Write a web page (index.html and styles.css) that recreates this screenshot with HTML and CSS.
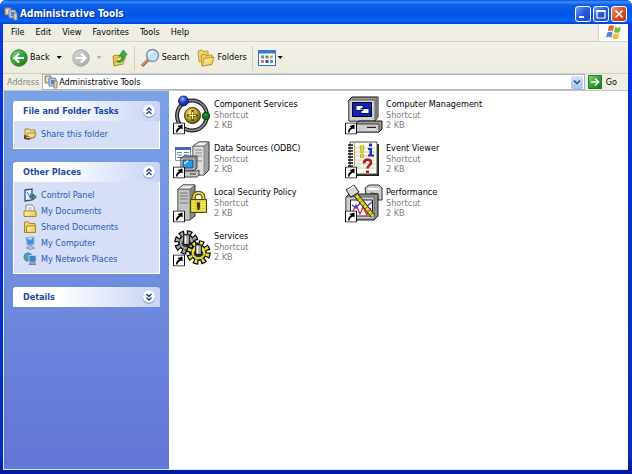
FILE: index.html
```html
<!DOCTYPE html>
<html lang="en">
<head>
  <meta charset="UTF-8" />
  <meta name="viewport" content="width=device-width, initial-scale=1.0"/>
  <title>Administrative Tools</title>
  <link rel="stylesheet" href="styles.css">
</head>
<body>

  <!-- Shared icon symbols -->
  <svg class="defs" aria-hidden="true">
    <defs>
      <linearGradient id="green" x1="0" y1="0" x2="1" y2="1"><stop offset="0" stop-color="#8fd97e"/><stop offset=".5" stop-color="#35a534"/><stop offset="1" stop-color="#16701a"/></linearGradient>
      <linearGradient id="grey" x1="0" y1="0" x2="1" y2="1"><stop offset="0" stop-color="#dededc"/><stop offset="1" stop-color="#a2a2a0"/></linearGradient>
      <linearGradient id="yellow" x1="0" y1="0" x2="1" y2="1"><stop offset="0" stop-color="#fffac0"/><stop offset="1" stop-color="#e9bf3c"/></linearGradient>
      <radialGradient id="gold" cx=".4" cy=".35" r=".7"><stop offset="0" stop-color="#fff27a"/><stop offset=".5" stop-color="#c2a52a"/><stop offset="1" stop-color="#5c4a08"/></radialGradient>
      <radialGradient id="ball" cx=".4" cy=".3" r=".7"><stop offset="0" stop-color="#a9c4ff"/><stop offset=".4" stop-color="#2d52dc"/><stop offset="1" stop-color="#0a1878"/></radialGradient>
      <symbol id="tools" viewBox="0 0 14 14">
        <path d="M1 1h6v7H1z" fill="#d9c489" stroke="#8e8260"/>
        <path d="M2 3h4M2 5h4" stroke="#fff8dc"/>
        <path d="M5 3h6l1 1v7H5z" fill="#b9c4e2" stroke="#6d7cae"/>
        <path d="M7 5h3v4H7z" fill="#5a7cd0"/>
        <path d="M10 6h3v7h-3z" fill="#e7d9a8" stroke="#8e8260"/>
      </symbol>
      <symbol id="shortcut" viewBox="0 0 12 12">
        <path d="M.5.5h11v11H.5z" fill="#fff" stroke="#111"/>
        <path d="M3 10c0-3 1-4 3-5L4.500 3.500 9.500 2v5L8 6C6 7 4.500 8 4.500 10z" fill="#000"/>
      </symbol>
      <symbol id="chevrons-up" viewBox="0 0 14 14">
        <circle cx="7" cy="7.500" r="6.300" fill="#8e9cc9"/>
        <circle cx="7" cy="6.800" r="6" fill="#fff"/>
        <path d="M4.500 6.500L7 4l2.500 2.500M4.500 10L7 7.500 9.500 10" fill="none" stroke="#1c3f94" stroke-width="1.300"/>
      </symbol>
      <symbol id="chevrons-down" viewBox="0 0 14 14">
        <circle cx="7" cy="7.500" r="6.300" fill="#8e9cc9"/>
        <circle cx="7" cy="6.800" r="6" fill="#fff"/>
        <path d="M4.500 4L7 6.500 9.500 4M4.500 7.500L7 10l2.500-2.500" fill="none" stroke="#1c3f94" stroke-width="1.300"/>
      </symbol>
      <symbol id="gear" viewBox="-13 -13 26 26">
        <circle r="10" fill="none" stroke="#000" stroke-width="5.500" stroke-dasharray="5.300 2.554"/>
        <circle r="8" fill="currentColor" stroke="#000" stroke-width="1.500"/>
        <circle r="9.500" fill="none" stroke="currentColor" stroke-width="4" stroke-dasharray="2.800 4.661" stroke-dashoffset="-1.100"/>
        <ellipse cy="1" rx="5" ry="4" fill="#333"/>
        <path d="M-3-8h6V2h-6z" fill="#a8a8a8" stroke="#111"/>
        <path d="M-1-7v8" stroke="#fff" stroke-width="1.500"/>
      </symbol>
    </defs>
  </svg>

  <div class="window">
    <header class="titlebar">
      <svg class="icon-14"><use href="#tools"/></svg>
      <h1>Administrative Tools</h1>
      <div class="controls">
        <button type="button" aria-label="Minimize"><svg viewBox="0 0 14 14"><path d="M3 10h5" stroke="#fff" stroke-width="2"/></svg></button>
        <button type="button" aria-label="Maximize"><svg viewBox="0 0 14 14"><path d="M3 4h8v7H3z" fill="none" stroke="#fff" stroke-width="1.200"/><path d="M2.500 4h9" stroke="#fff" stroke-width="2"/></svg></button>
        <button type="button" class="close" aria-label="Close"><svg viewBox="0 0 14 14"><path d="M3.500 3.500l7 7M10.500 3.500l-7 7" stroke="#fff" stroke-width="1.700"/></svg></button>
      </div>
    </header>

    <nav class="menubar">
      <button type="button">File</button>
      <button type="button">Edit</button>
      <button type="button">View</button>
      <button type="button">Favorites</button>
      <button type="button">Tools</button>
      <button type="button">Help</button>
      <div class="flag">
        <svg viewBox="1 1 14 13">
          <path d="M3.500 2c2-1 3-1 4.500 0L7 6.500C5.500 5.500 4.500 5.500 2.500 6.500z" fill="#e8602c"/>
          <path d="M9 2.500c1.500 1 3 1 5 0L13 7c-2 1-3.500 1-5 0z" fill="#76b843"/>
          <path d="M2.200 7.500c2-1 3-1 4.500 0l-1 4.500c-1.500-1-2.700-1-4.700 0z" fill="#4a86dc"/>
          <path d="M7.700 8c1.500 1 3 1 5 0l-1 4.500c-2 1-3.500 1-5 0z" fill="#f4bd30"/>
        </svg>
      </div>
    </nav>

    <div class="toolbar">
      <button type="button" class="tool">
        <svg class="icon-18" viewBox="0 0 18 18"><circle cx="9" cy="9" r="8.200" fill="url(#green)" stroke="#23802a"/><path d="M14 9H5M9 4.500L4.500 9 9 13.500" fill="none" stroke="#fff" stroke-width="2.200"/></svg>
        Back
      </button>
      <button type="button" class="caret" aria-label="Back history"></button>
      <button type="button" class="tool forward" aria-label="Forward">
        <svg class="icon-18" viewBox="0 0 18 18"><circle cx="9" cy="9" r="8.200" fill="url(#grey)" stroke="#a6a6a4"/><path d="M4 9h9M9 4.500L13.500 9 9 13.500" fill="none" stroke="#fff" stroke-width="2.200"/></svg>
      </button>
      <button type="button" class="caret disabled" aria-label="Forward history"></button>
      <button type="button" class="tool up" aria-label="Up">
        <svg class="icon-18" viewBox="0 0 18 18">
          <path d="M2 7l4-1 1 1 5-1v9l-9 2z" fill="#eecb55" stroke="#b08a25"/>
          <path d="M3 16.500L6 9l9-2-3 8z" fill="url(#yellow)" stroke="#b8902a" stroke-width=".8"/>
          <path d="M6 12c4 0 5-2 5-5H8l4.500-6L16 6h-2.500c0 5-2 8-7.500 7z" fill="#3fb03a" stroke="#187a1e" stroke-width=".8"/>
        </svg>
      </button>
      <span class="divider"></span>
      <button type="button" class="tool">
        <svg class="icon-20" viewBox="0 0 20 20"><path d="M8 12l-6 6" stroke="#9c5a2c" stroke-width="3"/><path d="M8 11.500l-6 6" stroke="#d99a66" stroke-width="1.400"/><circle cx="12.500" cy="7.500" r="6" fill="#c5e4fa" stroke="#7b93b8" stroke-width="1.500"/><path d="M9 7c0-2 1.500-3.500 4-3.500" stroke="#fff" stroke-width="1.600" fill="none"/></svg>
        Search
      </button>
      <button type="button" class="tool folders">
        <svg class="icon-18" viewBox="0 0 18 18">
          <path d="M1 2l4-1 1 1.500 5-.5v9l-9 2z" fill="#f3d76c" stroke="#b5922e" stroke-width=".9"/>
          <path d="M4 6l4-1 1 1.500 6-.5v9l-10 2z" fill="#f0cc55" stroke="#b5922e" stroke-width=".9"/>
          <path d="M5 17L7.500 9.500 17 8l-2 7.500z" fill="url(#yellow)" stroke="#b5922e" stroke-width=".9"/>
        </svg>
        Folders
      </button>
      <span class="divider"></span>
      <button type="button" class="tool" aria-label="Views">
        <svg class="icon-18" viewBox="0 0 18 18">
          <path d="M.500 1.500h17v15H.500z" fill="#fff" stroke="#3b6fc0"/><path d="M0 1h18v3.500H0z" fill="#3977d2"/>
          <path d="M3 6.500h3v3H3zM12 11h3v3h-3z" fill="#6a8bc9"/><path d="M7.500 6.500h3v3h-3z" fill="#51a35b"/><path d="M12 6.500h3v3h-3z" fill="#e4a84a"/><path d="M3 11h3v3H3z" fill="#cf7b62"/><path d="M7.500 11h3v3h-3z" fill="#2c4fa8"/>
        </svg>
      </button>
      <button type="button" class="caret views" aria-label="Choose view"></button>
    </div>

    <form class="addressbar">
      <label for="address">Address</label>
      <div class="combo">
        <svg class="icon-14"><use href="#tools"/></svg>
        <input id="address" type="text" value="Administrative Tools">
        <button type="button" aria-label="Show addresses"><svg viewBox="0 0 12 12"><path d="M3 4.500l3 3 3-3" fill="none" stroke="#34518f" stroke-width="1.700"/></svg></button>
      </div>
      <button type="button" class="go">
        <svg class="icon-14" viewBox="0 0 14 14"><path d="M.500.500h13v13H.500z" fill="url(#green)" stroke="#1d7a25"/><path d="M3 7h7M7 3.500L10.500 7 7 10.500" fill="none" stroke="#fff" stroke-width="1.700"/></svg>
        Go
      </button>
    </form>

    <div class="content">
      <aside class="sidebar">
        <section class="panel">
          <header>
            <h2>File and Folder Tasks</h2>
            <button type="button" aria-label="Collapse File and Folder Tasks"><svg><use href="#chevrons-up"/></svg></button>
          </header>
          <ul>
            <li><a href="#">
              <svg viewBox="0 0 14 14"><path d="M2 2h4l1 1h5v7H2z" fill="#f5dc7b" stroke="#a98830"/><path d="M3 11l2-5h8l-2 5z" fill="url(#yellow)" stroke="#a98830"/><path d="M1 8l4 1 4 2-3 2-5-1z" fill="#5a4530"/><path d="M3 10l5 1" stroke="#f1c7a0"/></svg>
              Share this folder</a></li>
          </ul>
        </section>

        <section class="panel">
          <header>
            <h2>Other Places</h2>
            <button type="button" aria-label="Collapse Other Places"><svg><use href="#chevrons-up"/></svg></button>
          </header>
          <ul>
            <li><a href="#">
              <svg viewBox="0 0 14 14"><path d="M2 2l7-1v11l-7 1z" fill="#e9f1fc" stroke="#2d4e8c" stroke-width="1.300"/><path d="M4 4l3 5 1-4" stroke="#4478c4" fill="none"/><path d="M7 8h3V6l3.500 3-3.500 3v-2H7z" fill="#4b9c4f" stroke="#2d4e6c" stroke-width=".8"/></svg>
              Control Panel</a></li>
            <li><a href="#">
              <svg viewBox="0 0 14 14"><path d="M3 1h6l2 2v6H3z" fill="#fff" stroke="#7c8794"/><path d="M5 4h4M5 6h4" stroke="#8ba6cf"/><path d="M1 7h12v5.500H1z" fill="url(#yellow)" stroke="#a88427"/></svg>
              My Documents</a></li>
            <li><a href="#">
              <svg viewBox="0 0 14 14"><path d="M1.500 2h4l1 1.500h5.500v9H1.500z" fill="#f4d668" stroke="#a88427"/><path d="M3.500 6h9v6.500h-9z" fill="url(#yellow)" stroke="#a88427"/></svg>
              Shared Documents</a></li>
            <li><a href="#">
              <svg viewBox="0 0 14 14"><path d="M3 1.500l8-.500v7.500L4 9z" fill="#438ce4" stroke="#a8b7ce" stroke-width="1.200"/><path d="M5 3l4-.500" stroke="#c4e4ff" stroke-width="1.500"/><path d="M6 9h3v2l3 1-5 1.500L3 12l3-1z" fill="#b9c4d4" stroke="#74839c" stroke-width=".7"/></svg>
              My Computer</a></li>
            <li><a href="#">
              <svg viewBox="0 0 14 14"><circle cx="5" cy="5" r="4.500" fill="#3d91c7"/><path d="M2 3l3-1 1 3-3 2z" fill="#61b262"/><path d="M6 3.500h7V10H6z" fill="#3f80da" stroke="#bdc9dc"/><path d="M8 10h3l2 2.500H6z" fill="#a0aec4" stroke="#596b8a" stroke-width=".7"/></svg>
              My Network Places</a></li>
          </ul>
        </section>

        <section class="panel">
          <header>
            <h2>Details</h2>
            <button type="button" aria-label="Expand Details"><svg><use href="#chevrons-down"/></svg></button>
          </header>
        </section>
      </aside>

      <main class="files">
        <a class="file" href="#">
          <svg viewBox="0 0 40 40">
            <circle cx="20" cy="20.500" r="15" fill="none" stroke="#222" stroke-width="4"/>
            <circle cx="20" cy="20.500" r="15" fill="none" stroke="#8d8d8d" stroke-width="1.600"/>
            <circle cx="20.500" cy="20.500" r="8" fill="url(#gold)" stroke="#3e3305"/>
            <path d="M20.500 15v11M15 20.500h11" stroke="#5c4a08" stroke-width="2.200"/>
            <path d="M20.500 17v7M17 20.500h7" stroke="#fff9a0"/>
            <circle cx="11.500" cy="6" r="5" fill="url(#ball)" stroke="#0a1464" stroke-width=".8"/>
            <circle cx="34" cy="21" r="3.700" fill="#177a23" stroke="#063b0c"/>
            <path d="M32.500 19.500l2 1" stroke="#7ed884"/>
            <use href="#shortcut" x="1" y="27.500" width="12" height="12"/>
          </svg>
          <span class="info"><strong>Component Services</strong><span>Shortcut</span><span>2 KB</span></span>
        </a>
        <a class="file" href="#">
          <svg viewBox="0 0 40 40">
            <path d="M5 5l3-3h26v20l-3 4H5z" fill="#9b9b9b" stroke="#111"/>
            <path d="M5 5h26v21H5z" fill="#d0d0d0" stroke="#444" stroke-width=".8"/>
            <path d="M31 5l3-3v20l-3 4z" fill="#777"/>
            <path d="M8.500 7.500h19v14h-19z" fill="#0b22c4" stroke="#000"/>
            <path d="M12 10.500h7v5h-7zM17 13.500h8v5h-8z" fill="#fff" stroke="#0a1464"/>
            <path d="M12 29h-1l4-3h23v8l-3 3H12z" fill="#9b9b9b" stroke="#111"/>
            <path d="M11 29h24v8H11z" fill="#cdcdcd" stroke="#222" stroke-width=".8"/>
            <path d="M23 32.500h9" stroke="#222" stroke-width="1.400"/>
            <path d="M23 34h9" stroke="#fff"/>
            <use href="#shortcut" x="1" y="27.500" width="12" height="12"/>
          </svg>
          <span class="info"><strong>Computer Management</strong><span>Shortcut</span><span>2 KB</span></span>
        </a>
        <a class="file" href="#">
          <svg viewBox="0 0 40 40">
            <path d="M21 7l6-4h10v28l-5 5H21z" fill="#a2a2a2" stroke="#333"/>
            <path d="M21 7h11v29H21z" fill="#ddd" stroke="#777" stroke-width=".8"/>
            <path d="M21 7l6-4h10l-5 4z" fill="#f2f2f2" stroke="#555" stroke-width=".8"/>
            <path d="M23 11h7M23 14h7M23 17h7M23 22h7" stroke="#888"/>
            <path d="M3.500 8.500h15v13h-15z" fill="#fff" stroke="#7d95c8"/>
            <path d="M3 8h16v3H3z" fill="#4569bd"/>
            <path d="M5 13.500h5M5 16h5M5 18.500h5M12 13.500h5M12 16h5" stroke="#6281bd"/>
            <path d="M9 19l3-2h13v12l-2 2H9z" fill="#a5a5a5" stroke="#222" stroke-width=".8"/>
            <path d="M9 19h14v12H9z" fill="#ddd" stroke="#555" stroke-width=".8"/>
            <path d="M11 21h10v8H11z" fill="#2d9adc" stroke="#163b70"/>
            <path d="M12 25l4-3.500" stroke="#c6f0ff" stroke-width="1.500"/>
            <path d="M11 32h14l2-1v5l-2 2H11z" fill="#c6c6c6" stroke="#222" stroke-width=".8"/>
            <path d="M18 35h6" stroke="#333"/>
            <use href="#shortcut" x="1" y="27.500" width="12" height="12"/>
          </svg>
          <span class="info"><strong>Data Sources (ODBC)</strong><span>Shortcut</span><span>2 KB</span></span>
        </a>
        <a class="file" href="#">
          <svg viewBox="0 0 40 40">
            <path d="M8 5h27v32H8z" fill="#222"/>
            <path d="M6 3h27v32H6z" fill="#fffde8" stroke="#555"/>
            <path d="M11 9h20M11 13h20M11 17h20M11 21h20M11 25h20M11 29h20" stroke="#b8c0cc" stroke-width=".8"/>
            <path d="M10.500 3v32" stroke="#c2a777"/>
            <path d="M4 6h5M4 9h5M4 12h5M4 15h5M4 18h5M4 21h5M4 24h5M4 27h5" stroke="#111" stroke-width="1.500"/>
            <path d="M16 7h4l-1 7h-2zM16.500 15.500h3v3h-3z" fill="#f4df20" stroke="#908216" stroke-width=".6"/>
            <path d="M25 4.500h3v3h-3zM24 9h4v6.500h2v2h-6v-2h1.500V11H24z" fill="#1a2fc8"/>
            <path d="M20 24.500c0-5 7-5 7-1 0 3-3.500 2.500-3.500 6" fill="none" stroke="#b51721" stroke-width="2.700"/>
            <path d="M22 31.500h3V34h-3z" fill="#b51721"/>
            <use href="#shortcut" x="1" y="27.500" width="12" height="12"/>
          </svg>
          <span class="info"><strong>Event Viewer</strong><span>Shortcut</span><span>2 KB</span></span>
        </a>
        <a class="file" href="#">
          <svg viewBox="0 0 40 40">
            <path d="M6 6l5-4h12v31l-5 4H6z" fill="#898989" stroke="#333"/>
            <path d="M6 6h12v31H6z" fill="#c4c4c4" stroke="#666" stroke-width=".8"/>
            <path d="M6 6l5-4h12l-5 4z" fill="#eee" stroke="#555" stroke-width=".8"/>
            <path d="M8 10h8M8 13h8M8 16h8M8 20h8" stroke="#777"/>
            <path d="M21.500 20v-5c0-7 10-7 10 0v5" fill="none" stroke="#4d4500" stroke-width="4"/>
            <path d="M21.500 20v-5c0-7 10-7 10 0v5" fill="none" stroke="#e2d84c" stroke-width="2"/>
            <path d="M18.500 16.500h16v13h-16z" fill="#dccd29" stroke="#4d4500"/>
            <path d="M20 19h3M20 21.500h3M20 24h3M20 27h3M29 19h4M29 21.500h4M29 24h4M29 27h4" stroke="#fff899"/>
            <path d="M25 19.500h3v3l-.5 4.500h-2L25 22.500z" fill="#3b3500"/>
            <use href="#shortcut" x="1" y="27.500" width="12" height="12"/>
          </svg>
          <span class="info"><strong>Local Security Policy</strong><span>Shortcut</span><span>2 KB</span></span>
        </a>
        <a class="file" href="#">
          <svg viewBox="0 0 40 40">
            <path d="M21 5l4-3h10l3 3v12h-4v-6l-7-1-2 3-3-1z" fill="#ccc" stroke="#333"/>
            <path d="M24 6h11" stroke="#fff" stroke-width="2"/>
            <path d="M2 14l3-3h29v22l-4 4H2z" fill="#8f8f8f" stroke="#222"/>
            <path d="M2 14h28v22H2z" fill="#cfcfcf" stroke="#555" stroke-width=".8"/>
            <path d="M6.500 17h22v16h-22z" fill="#fff" stroke="#222"/>
            <path d="M8 30l4-8 4 9 3-7 4 8 4-7" fill="none" stroke="#d62843" stroke-width="1.300"/>
            <path d="M8 22l4 3 5-6 5 5 6-5" fill="none" stroke="#2c44d4" stroke-width="1.300"/>
            <path d="M12 12l17 21" stroke="#222" stroke-width="5"/>
            <path d="M12 12l17 21" stroke="#f0d827" stroke-width="3"/>
            <path d="M12 12l17 21" stroke="#8d7a14" stroke-width="3" stroke-dasharray="1 3"/>
            <path d="M2 7l8-5 5 7-8 5z" fill="#d8d8d8" stroke="#222"/>
            <path d="M4 7l6-4" stroke="#fff" stroke-width="1.300"/>
            <use href="#shortcut" x="1" y="27.500" width="12" height="12"/>
          </svg>
          <span class="info"><strong>Performance</strong><span>Shortcut</span><span>2 KB</span></span>
        </a>
        <a class="file" href="#">
          <svg viewBox="0 0 40 40">
            <use href="#gear" class="gear-grey" x="2" y="3" width="25" height="25"/>
            <use href="#gear" class="gear-yellow" x="14" y="13" width="25" height="25"/>
            <use href="#shortcut" x="1" y="27.500" width="12" height="12"/>
          </svg>
          <span class="info"><strong>Services</strong><span>Shortcut</span><span>2 KB</span></span>
        </a>
      </main>
    </div>
  </div>

</body>
</html>
```

FILE: styles.css
```css
* {
  box-sizing: border-box;
}

body {
  margin: 0;
  background: #fff;
  color: #000;
  font: 9px/11px "DejaVu Sans Condensed", Tahoma, "Liberation Sans", sans-serif;
}

h1, h2, ul {
  margin: 0;
  padding: 0;
}

button, input {
  margin: 0;
  padding: 0;
  border: 0;
  background: none;
  color: inherit;
  font: inherit;
}

a {
  color: inherit;
  text-decoration: none;
}

svg {
  display: block;
  flex: none;
}

.defs {
  position: absolute;
  width: 0;
  height: 0;
}

.icon-14 { width: 14px; height: 14px; }
.icon-18 { width: 18px; height: 18px; }
.icon-20 { width: 20px; height: 20px; }

.window {
  display: flex;
  flex-direction: column;
  min-height: 100vh;
  padding: 0 4px 4px 3px;
  border-radius: 6px 6px 0 0;
  background: linear-gradient(to bottom, #0a4be0, #0831d9 60px, #0a2bc0 96%, #001a9c);
}

/* Title bar */
.titlebar {
  display: flex;
  align-items: center;
  gap: 2px;
  height: 24px;
  margin: 0 -4px 0 -3px;
  padding: 3px 5px 0 4px;
  border-radius: 6px 6px 0 0;
  background: linear-gradient(to bottom, #0a50d8 0, #3a8dff 2px, #0c5ce8 5px, #0354e3 14px, #0662fb 21px, #0340c4 24px);
  color: #fff;
}

.titlebar h1 {
  flex: 1;
  font-size: 10px;
  line-height: 14px;
  text-shadow: 1px 1px 1px #0a2a80;
}

.controls {
  display: flex;
  gap: 2px;
}

.controls button {
  width: 16px;
  height: 16px;
  border: 1px solid #fff;
  border-radius: 3px;
  background: linear-gradient(135deg, #6f9cf8, #2458dc 50%, #1f50cf);
}

.controls .close {
  background: linear-gradient(135deg, #f09a80, #dc4a24 50%, #c03c16);
}

.controls svg {
  width: 14px;
  height: 14px;
}

/* Menu, toolbar and address bar */
.menubar {
  display: flex;
  gap: 11px;
  height: 18px;
  padding-left: 8px;
  border-bottom: 1px solid #d8d2bd;
  background: #efeee4;
}

.flag {
  display: flex;
  align-items: center;
  justify-content: center;
  width: 30px;
  margin-left: auto;
  border-left: 1px solid #d8d2bd;
  background: #fff;
}

.flag svg {
  width: 16px;
  height: 15px;
}

.toolbar {
  display: flex;
  align-items: center;
  height: 32px;
  padding-left: 7px;
  background: linear-gradient(to bottom, #f3f2ea, #edebdf);
  border-bottom: 1px solid #d8d2bd;
}

.tool {
  display: flex;
  align-items: center;
  gap: 2px;
}

.forward { margin-left: 10px; }
.up { margin-left: 9px; }
.folders { margin-left: 8px; }

.caret {
  width: 5px;
  height: 3px;
  margin-left: 7px;
  background: #000;
  clip-path: polygon(0 0, 100% 0, 50% 100%);
}

.caret.disabled {
  background: #b5b3a8;
}

.caret.views {
  margin-left: 2px;
}

.divider {
  width: 1px;
  height: 24px;
  margin: 0 5px;
  background: #d3cfbd;
}

.addressbar {
  display: flex;
  align-items: center;
  gap: 3px;
  height: 17px;
  padding: 0 11px 0 4px;
  border-bottom: 1px solid #c9c6b8;
  background: #efeee4;
}

.addressbar label {
  color: #83827a;
}

.combo {
  display: flex;
  flex: 1;
  align-items: center;
  height: 16px;
  padding: 0 1px;
  border: 1px solid #a3b4cc;
  background: #fff;
}

.combo input {
  flex: 1;
  min-width: 0;
  margin-left: 1px;
  outline: 0;
}

.combo button {
  width: 12px;
  height: 13px;
  border-radius: 2px;
  background: linear-gradient(to bottom, #d5e1fd, #a9c2f5);
}

.combo button svg {
  width: 12px;
  height: 12px;
}

.go {
  display: flex;
  align-items: center;
  gap: 4px;
}

/* Content */
.content {
  display: flex;
  flex: 1;
  border-left: 1px solid #dbe6fb;
  border-bottom: 1px solid #dbe6fb;
  background: #fff;
}

.sidebar {
  display: flex;
  flex-direction: column;
  gap: 13px;
  width: 165px;
  padding: 10px 9px;
  background: linear-gradient(to bottom, #7ba2e7, #6375d6);
}

.panel header {
  display: flex;
  align-items: center;
  justify-content: space-between;
  height: 20px;
  padding: 0 4px 0 10px;
  border-radius: 3px 3px 0 0;
  background: linear-gradient(to right, #fff 30%, #c6d3f7);
}

.panel h2 {
  color: #1c49a8;
  font-size: 9px;
}

.panel header svg {
  width: 14px;
  height: 14px;
}

.panel ul {
  display: flex;
  flex-direction: column;
  gap: 2px;
  padding: 6px 9px 7px;
  border: 1px solid #fff;
  border-top: 0;
  background: #d6dff7;
  list-style: none;
}

.panel a {
  display: flex;
  align-items: center;
  gap: 4px;
  color: #2a58b8;
}

.panel a svg {
  width: 14px;
  height: 14px;
}

.files {
  display: grid;
  flex: 1;
  grid-template-columns: repeat(2, 172px);
  grid-auto-rows: 40px;
  gap: 4px 0;
  align-content: start;
  padding: 4px 3px;
}

.file {
  display: flex;
  gap: 2px;
}

.file > svg {
  width: 40px;
  height: 40px;
}

.info {
  display: flex;
  flex-direction: column;
  padding-top: 4px;
  color: #808080;
  line-height: 10px;
}

.info strong {
  color: #000;
  font-weight: normal;
  line-height: 11px;
}

.gear-grey { color: #a2a29e; }
.gear-yellow { color: #e8dc3a; }
```
